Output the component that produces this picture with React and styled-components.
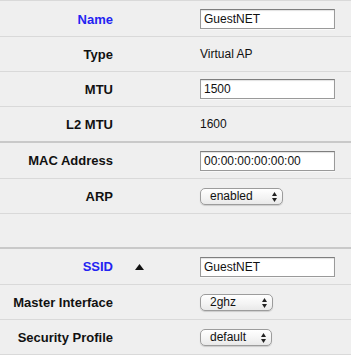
import React from 'react'
import styled, { createGlobalStyle } from 'styled-components'

const Global = createGlobalStyle`
  html, body {
    margin: 0;
    padding: 0;
    background: #efefef;
  }
  body {
    font-family: "Liberation Sans", Arial, sans-serif;
    color: #111;
  }
`

const Form = styled.div`
  width: 351px;
  padding-top: 1px;
  border-top: 1px solid #d9d9d9;
`

const Row = styled.div`
  display: grid;
  grid-template-columns: 113px 87px 1fr;
  align-items: center;
  height: ${p => p.$h || 34}px;
  border-bottom: ${p => (p.$thick ? '2px solid #c9c9c9' : '1px solid #d9d9d9')};
`

const Label = styled.div`
  text-align: right;
  font-size: 13px;
  font-weight: bold;
  color: ${p => (p.$link ? '#2323f2' : '#111')};
  white-space: nowrap;
`

const Mid = styled.div`
  display: flex;
  align-items: center;
  padding-left: 22px;
`

const Value = styled.div`
  font-size: 12px;
  color: #111;
`

const Input = styled.div`
  box-sizing: border-box;
  width: 135px;
  height: 20px;
  padding: 0 3px;
  line-height: 19px;
  font-size: 12px;
  background: #fff;
  border: 1px solid #9a9a9a;
  border-top-color: #7e7e7e;
  box-shadow: inset 0 1px 1px rgba(0, 0, 0, 0.12), 0 1px 0 rgba(255, 255, 255, 0.6);
`

const Select = styled.div`
  box-sizing: border-box;
  position: relative;
  width: ${p => p.$w}px;
  height: 17px;
  padding-left: 9px;
  line-height: 15px;
  font-size: 12px;
  border: 1px solid #9c9c9c;
  border-radius: 5px;
  background: linear-gradient(#ffffff, #f3f3f3 60%, #e9e9e9);
  box-shadow: 0 1px 1px rgba(0, 0, 0, 0.15);
`

const Arrows = styled.svg`
  position: absolute;
  right: 5px;
  top: 3px;
`

const Sort = () => (
  <svg width="9" height="6" viewBox="0 0 9 6">
    <polygon points="0,6 4.5,0 9,6" fill="#111" />
  </svg>
)

const Popup = ({ w, children }) => (
  <Select $w={w}>
    {children}
    <Arrows width="5" height="10" viewBox="0 0 5 10">
      <polygon points="0,4 2.5,0 5,4" fill="#222" />
      <polygon points="0,6 2.5,10 5,6" fill="#222" />
    </Arrows>
  </Select>
)

export default function App() {
  return (
    <>
      <Global />
      <Form>
        <Row>
          <Label $link>Name</Label>
          <Mid />
          <Input>GuestNET</Input>
        </Row>
        <Row>
          <Label>Type</Label>
          <Mid />
          <Value>Virtual AP</Value>
        </Row>
        <Row>
          <Label>MTU</Label>
          <Mid />
          <Input>1500</Input>
        </Row>
        <Row $thick>
          <Label>L2 MTU</Label>
          <Mid />
          <Value>1600</Value>
        </Row>
        <Row $h={35}>
          <Label>MAC Address</Label>
          <Mid />
          <Input>00:00:00:00:00:00</Input>
        </Row>
        <Row>
          <Label>ARP</Label>
          <Mid />
          <Popup w={83}>enabled</Popup>
        </Row>
        <Row $thick $h={33} />
        <Row $h={35}>
          <Label $link>SSID</Label>
          <Mid><Sort /></Mid>
          <Input>GuestNET</Input>
        </Row>
        <Row>
          <Label>Master Interface</Label>
          <Mid />
          <Popup w={73}>2ghz</Popup>
        </Row>
        <Row>
          <Label>Security Profile</Label>
          <Mid />
          <Popup w={72}>default</Popup>
        </Row>
      </Form>
    </>
  )
}
